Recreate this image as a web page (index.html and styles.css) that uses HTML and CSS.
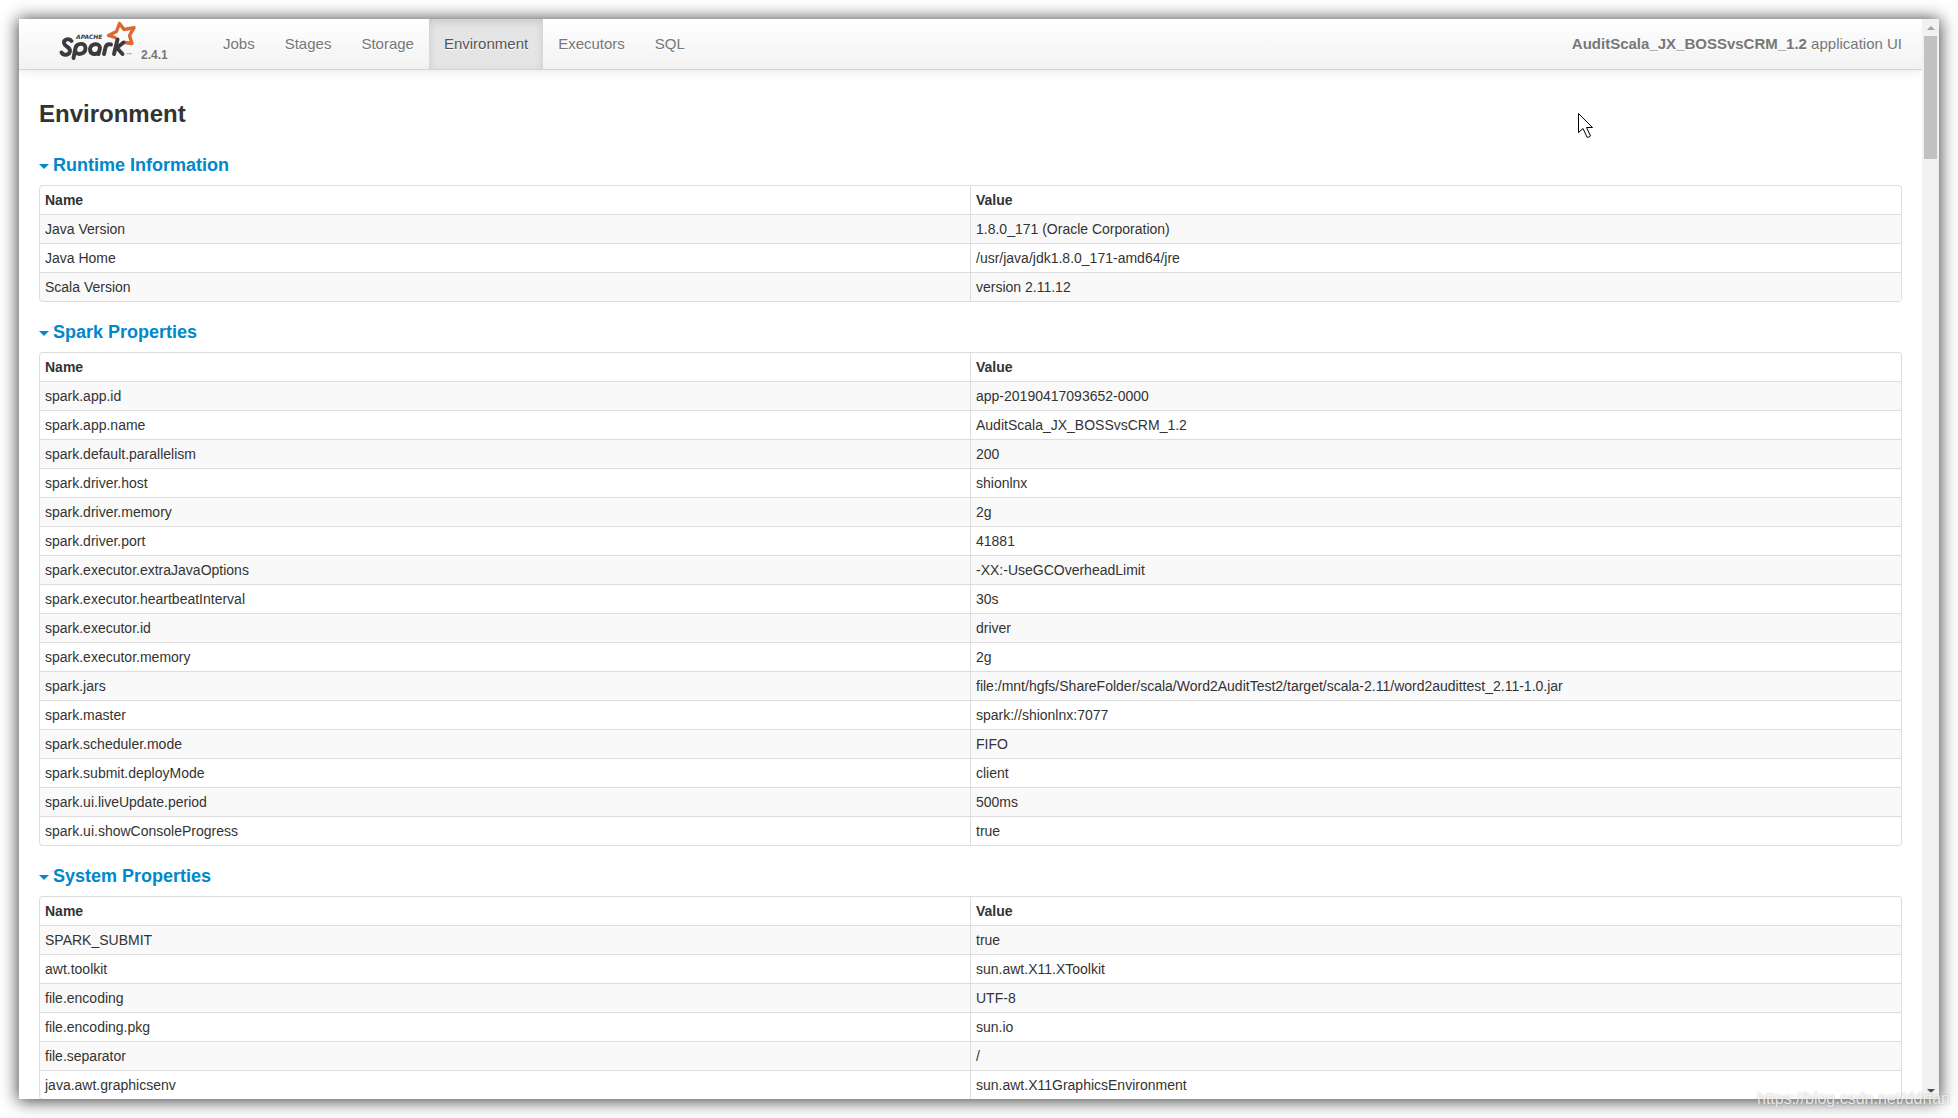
FILE: index.html
```html
<!DOCTYPE html>
<html lang="en">
<head>
<meta charset="utf-8">
<title>AuditScala_JX_BOSSvsCRM_1.2 - Environment</title>
<link rel="stylesheet" href="styles.css">
</head>
<body>
<div class="window">
  <div class="page">
    <header class="navbar">
      <a class="brand" href="#">
        <svg class="logo" width="78" height="42" viewBox="0 0 78 42" role="img" aria-label="Apache Spark">
          <path d="M60.500 2.500 L65 8.500 L75 6.800 L70.500 14.500 L73 22.500 L66 21.500 M60.500 2.500 L57.500 10.500 L49.500 14.500 L56 16.500" fill="none" stroke="#dd6830" stroke-width="3.400" stroke-linejoin="round" stroke-linecap="round"/>
          <g fill="none" stroke="#3c3a3e" stroke-width="3.900" stroke-linecap="round" stroke-linejoin="round">
            <path d="M12.500 20 C10.500 17 4.500 18 5 22 C5.500 25.500 11.500 26 11 30 C10.500 34.500 4.500 35 2.500 31.500"/>
            <path d="M14.500 37 L16.500 27 C17.500 22 26.500 21 26.500 27 C26.500 33.500 18.500 34.500 16.500 30.500"/>
            <path d="M39.500 33 L41 27 C41 21.500 31.500 22 31 28 C31 34.500 38 34 40 30.500"/>
            <path d="M45 33 L46.500 26.500 Q47.500 22.500 52 23.500"/>
            <path d="M55 33 L58.500 18.500 M57 27.500 L64.500 21.500 M58 27 L63.500 33"/>
          </g>
          <text x="17" y="18" class="logo-small">APACHE</text>
          <path d="M67.500 32.500 h1.500 M70 33.500 v-1.500 l1 1 l1 -1 v1.500" stroke="#888" stroke-width=".6" fill="none"/>
        </svg>
        <span class="version">2.4.1</span>
      </a>
      <nav class="tabs">
        <a href="#">Jobs</a>
        <a href="#">Stages</a>
        <a href="#">Storage</a>
        <a href="#" class="active">Environment</a>
        <a href="#">Executors</a>
        <a href="#">SQL</a>
      </nav>
      <p class="app-name"><strong>AuditScala_JX_BOSSvsCRM_1.2</strong> application UI</p>
    </header>
    <main class="content">
      <h3>Environment</h3>
      <section>
        <h4><a href="#"><span class="caret"></span>Runtime Information</a></h4>
        <table>
          <thead><tr><th>Name</th><th>Value</th></tr></thead>
          <tbody>
            <tr><td>Java Version</td><td>1.8.0_171 (Oracle Corporation)</td></tr>
            <tr><td>Java Home</td><td>/usr/java/jdk1.8.0_171-amd64/jre</td></tr>
            <tr><td>Scala Version</td><td>version 2.11.12</td></tr>
          </tbody>
        </table>
      </section>
      <section>
        <h4><a href="#"><span class="caret"></span>Spark Properties</a></h4>
        <table>
          <thead><tr><th>Name</th><th>Value</th></tr></thead>
          <tbody>
            <tr><td>spark.app.id</td><td>app-20190417093652-0000</td></tr>
            <tr><td>spark.app.name</td><td>AuditScala_JX_BOSSvsCRM_1.2</td></tr>
            <tr><td>spark.default.parallelism</td><td>200</td></tr>
            <tr><td>spark.driver.host</td><td>shionlnx</td></tr>
            <tr><td>spark.driver.memory</td><td>2g</td></tr>
            <tr><td>spark.driver.port</td><td>41881</td></tr>
            <tr><td>spark.executor.extraJavaOptions</td><td>-XX:-UseGCOverheadLimit</td></tr>
            <tr><td>spark.executor.heartbeatInterval</td><td>30s</td></tr>
            <tr><td>spark.executor.id</td><td>driver</td></tr>
            <tr><td>spark.executor.memory</td><td>2g</td></tr>
            <tr><td>spark.jars</td><td>file:/mnt/hgfs/ShareFolder/scala/Word2AuditTest2/target/scala-2.11/word2audittest_2.11-1.0.jar</td></tr>
            <tr><td>spark.master</td><td>spark://shionlnx:7077</td></tr>
            <tr><td>spark.scheduler.mode</td><td>FIFO</td></tr>
            <tr><td>spark.submit.deployMode</td><td>client</td></tr>
            <tr><td>spark.ui.liveUpdate.period</td><td>500ms</td></tr>
            <tr><td>spark.ui.showConsoleProgress</td><td>true</td></tr>
          </tbody>
        </table>
      </section>
      <section>
        <h4><a href="#"><span class="caret"></span>System Properties</a></h4>
        <table>
          <thead><tr><th>Name</th><th>Value</th></tr></thead>
          <tbody>
            <tr><td>SPARK_SUBMIT</td><td>true</td></tr>
            <tr><td>awt.toolkit</td><td>sun.awt.X11.XToolkit</td></tr>
            <tr><td>file.encoding</td><td>UTF-8</td></tr>
            <tr><td>file.encoding.pkg</td><td>sun.io</td></tr>
            <tr><td>file.separator</td><td>/</td></tr>
            <tr><td>java.awt.graphicsenv</td><td>sun.awt.X11GraphicsEnvironment</td></tr>
          </tbody>
        </table>
      </section>
    </main>
  </div>
  <div class="scrollbar" aria-hidden="true">
    <span class="arrow up"></span>
    <span class="thumb"></span>
    <span class="arrow down"></span>
  </div>
</div>
<svg class="cursor" width="16" height="26" viewBox="0 0 16 26" aria-hidden="true">
  <path d="M.5 .5 V19.500 L5 15.500 L9 24 Q11 25 12.500 23 L8.500 14.500 H14.500 Z" fill="#fff" stroke="#000"/>
</svg>
<div class="watermark">https://blog.csdn.net/ddrfan</div>
</body>
</html>
```
FILE: styles.css
```css
* { box-sizing: border-box; }

body {
  margin: 0;
  padding: 19px;
  height: 100vh;
  overflow: hidden;
  background: #fff;
  color: #333;
  font: 14px/20px "Liberation Sans", Arial, sans-serif;
}

a { text-decoration: none; }

.window {
  display: flex;
  height: 100%;
  background: #fff;
  box-shadow: 0 1px 16px 1px rgba(0, 0, 0, .75);
}

.page {
  flex: 1;
  min-width: 0;
  overflow: hidden;
}

.navbar {
  display: flex;
  align-items: stretch;
  height: 51px;
  padding: 0 20px 0 40px;
  border-bottom: 1px solid #d4d4d4;
  background: linear-gradient(#fff, #f2f2f2);
  box-shadow: 0 1px 10px rgba(0, 0, 0, .1);
  font-size: 15px;
  color: #777;
}

.brand {
  display: flex;
  align-items: flex-end;
  width: 149px;
  gap: 4px;
  padding-bottom: 6px;
}

.logo { display: block; }

.logo-small {
  font: italic bold 6px "DejaVu Sans", sans-serif;
  fill: #3c3a3e;
}

.version {
  color: #777;
  font-size: 12px;
  font-weight: bold;
  line-height: 16px;
}

.tabs { display: flex; }

.tabs a {
  padding: 15px;
  color: #777;
  text-shadow: 0 1px 0 #fff;
}

.tabs .active {
  background: #e5e5e5;
  color: #555;
  box-shadow: inset 0 3px 8px rgba(0, 0, 0, .125);
}

.app-name {
  margin: 0 0 0 auto;
  padding: 15px 0;
  text-shadow: 0 1px 0 #fff;
}

.content { padding: 24px 20px 0; }

h3 {
  margin: 0 0 21px;
  font-size: 24px;
  line-height: 40px;
}

h4 {
  margin: 0 0 10px;
  font-size: 18px;
  line-height: 20px;
}

h4 a {
  display: flex;
  align-items: center;
  gap: 4px;
  color: #08c;
}

.caret {
  margin-top: 2px;
  border: 5px solid transparent;
  border-top-color: #08c;
  border-bottom: 0;
}

table {
  width: 100%;
  margin-bottom: 20px;
  border: 1px solid #ddd;
  border-left: 0;
  border-collapse: separate;
  border-spacing: 0;
  border-radius: 4px;
  table-layout: fixed;
}

th, td {
  padding: 4px 5px;
  border-left: 1px solid #ddd;
  text-align: left;
}

td { border-top: 1px solid #ddd; }

th:first-child { border-top-left-radius: 4px; }

tr:last-child td:first-child { border-bottom-left-radius: 4px; }

thead tr:last-child th:first-child { border-bottom-left-radius: 0; }

tbody tr:nth-child(odd) td { background: #f9f9f9; }

.scrollbar {
  display: flex;
  flex-direction: column;
  align-items: center;
  width: 17px;
  background: #f1f1f1;
}

.arrow {
  display: flex;
  align-items: center;
  justify-content: center;
  height: 17px;
}

.arrow::before {
  content: "";
  border: 4px solid transparent;
}

.up::before {
  border-top: 0;
  border-bottom-color: #a3a3a3;
}

.down { margin-top: auto; }

.down::before {
  border-bottom: 0;
  border-top-color: #505050;
}

.thumb {
  width: 13px;
  height: 123px;
  background: #c1c1c1;
}

.cursor {
  position: absolute;
  top: 113px;
  right: 364px;
}

.watermark {
  position: absolute;
  right: 8px;
  bottom: 10px;
  color: rgba(255, 255, 255, .8);
  font-size: 16px;
  line-height: 18px;
  text-shadow: 0 0 2px rgba(0, 0, 0, .3);
}
```
